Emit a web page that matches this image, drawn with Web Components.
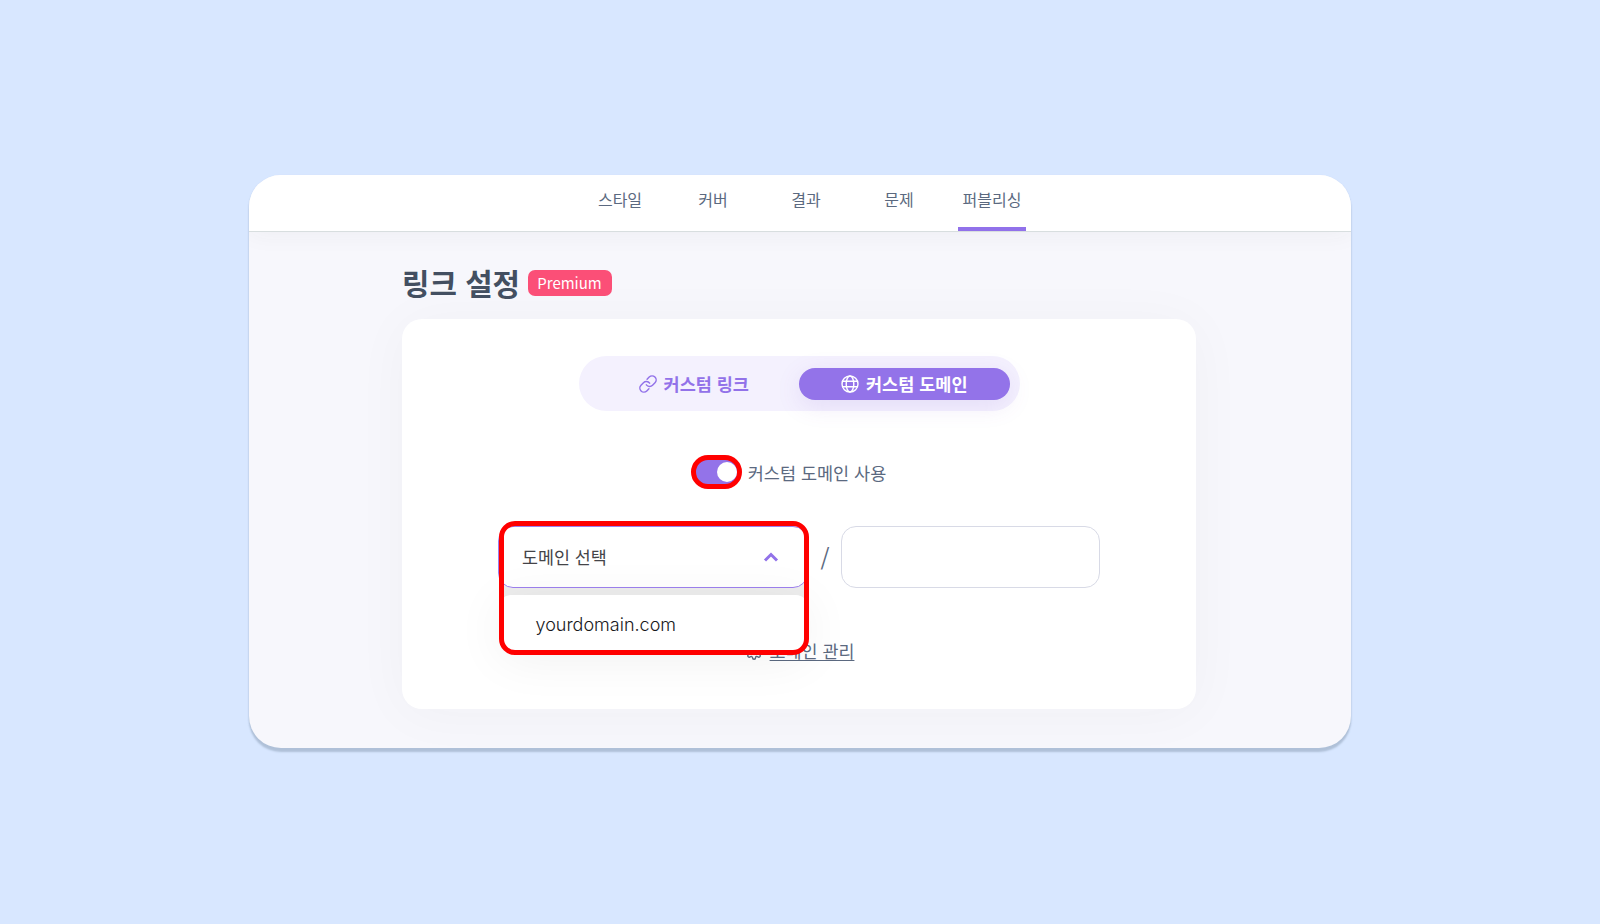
<!DOCTYPE html>
<html lang="ko">
<head>
<meta charset="UTF-8">
<title>링크 설정</title>
<style>
    body {
        margin: 0;
        height: 924px;
        background: #d8e7ff;
        color: #5b6980;
        font-family: "Noto Sans CJK KR", sans-serif;
        overflow: hidden;
        padding: 175px 0 0 249px;
        box-sizing: border-box;
    }
</style>
</head>
<body>
<app-window>
    <nav-tabs slot="nav">
        <nav-tab>스타일</nav-tab>
        <nav-tab>커버</nav-tab>
        <nav-tab>결과</nav-tab>
        <nav-tab>문제</nav-tab>
        <nav-tab active>퍼블리싱</nav-tab>
    </nav-tabs>
    <section-title badge="Premium">링크 설정</section-title>
    <settings-card>
        <segment-control>
            <segment-item icon="link">커스텀 링크</segment-item>
            <segment-item icon="globe" active>커스텀 도메인</segment-item>
        </segment-control>
        <toggle-switch>커스텀 도메인 사용</toggle-switch>
        <domain-row>
            <domain-select label="도메인 선택">yourdomain.com</domain-select>
        </domain-row>
        <manage-link>도메인 관리</manage-link>
    </settings-card>
</app-window>

<script>
const icons = {
    link: `<svg width="18" height="18" viewBox="1 1 22 22" fill="none" stroke="currentColor" stroke-width="1.8" stroke-linecap="round" stroke-linejoin="round"><path d="M10 13a5 5 0 0 0 7.54.54l3-3a5 5 0 0 0-7.07-7.07l-2.6 2.6"/><path d="M14 11a5 5 0 0 0-7.54-.54l-3 3a5 5 0 0 0 7.07 7.07l2.6-2.6"/></svg>`,
    globe: `<svg width="18" height="18" viewBox="0 0 18 18" fill="none" stroke="currentColor" stroke-width="1.4"><circle cx="9" cy="9" r="8"/><ellipse cx="9" cy="9" rx="3.8" ry="8"/><path d="M1.6 6.2h14.8M1.6 11.8h14.8"/></svg>`,
    gear: `<svg width="18" height="18" viewBox="0 0 24 24" fill="none" stroke="currentColor" stroke-width="1.9" stroke-linecap="round" stroke-linejoin="round"><circle cx="12" cy="12" r="3"/><path d="M19.4 15a1.65 1.65 0 0 0 .33 1.82l.06.06a2 2 0 1 1-2.83 2.83l-.06-.06a1.65 1.65 0 0 0-1.82-.33 1.65 1.65 0 0 0-1 1.51V21a2 2 0 0 1-4 0v-.09A1.65 1.65 0 0 0 9 19.4a1.65 1.65 0 0 0-1.82.33l-.06.06a2 2 0 1 1-2.83-2.83l.06-.06a1.65 1.65 0 0 0 .33-1.82 1.65 1.65 0 0 0-1.51-1H3a2 2 0 0 1 0-4h.09A1.65 1.65 0 0 0 4.6 9a1.65 1.65 0 0 0-.33-1.82l-.06-.06a2 2 0 1 1 2.83-2.83l.06.06a1.65 1.65 0 0 0 1.82.33H9a1.65 1.65 0 0 0 1-1.51V3a2 2 0 0 1 4 0v.09a1.65 1.65 0 0 0 1 1.51 1.65 1.65 0 0 0 1.82-.33l.06-.06a2 2 0 1 1 2.83 2.83l-.06.06a1.65 1.65 0 0 0-.33 1.82V9a1.65 1.65 0 0 0 1.51 1H21a2 2 0 0 1 0 4h-.09a1.65 1.65 0 0 0-1.51 1z"/></svg>`
};

class BaseElement extends HTMLElement {
    constructor() {
        super();
        this.attachShadow({ mode: 'open' });
    }

    connectedCallback() {
        this.shadowRoot.innerHTML = this.render();
    }
}

class AppWindow extends BaseElement {
    render() {
        return `
            <style>
                :host {
                    display: flex;
                    flex-direction: column;
                    box-sizing: border-box;
                    width: 1102px;
                    height: 573px;
                    border-radius: 32px;
                    background: #f7f7fc;
                    overflow: hidden;
                    box-shadow: 0 4px 2px #afc0d8, 0 1px 2px #b9c9e4;
                }
                header {
                    position: relative;
                    z-index: 1;
                    height: 56px;
                    flex: none;
                    background: #fff;
                    border-bottom: 1px solid #d8dedf;
                    box-shadow: 0 2px 24px rgba(60, 50, 60, .05);
                }
                main { padding: 34px 155px 0 153px; }
            </style>
            <header><slot name="nav"></slot></header>
            <main><slot></slot></main>
        `;
    }
}

class NavTabs extends BaseElement {
    render() {
        return `
            <style>
                :host {
                    display: flex;
                    justify-content: center;
                    gap: 25px;
                    height: 56px;
                    padding-left: 12px;
                }
            </style>
            <slot></slot>
        `;
    }
}

class NavTab extends BaseElement {
    render() {
        return `
            <style>
                :host {
                    display: block;
                    box-sizing: border-box;
                    width: 68px;
                    padding-top: 12px;
                    text-align: center;
                    font-size: 16px;
                    line-height: 24px;
                    border-bottom: 4px solid transparent;
                }
                :host([active]) { border-bottom-color: #9171ea; }
            </style>
            <slot></slot>
        `;
    }
}

class SectionTitle extends BaseElement {
    render() {
        return `
            <style>
                :host { display: flex; align-items: flex-start; height: 53px; }
                h1 {
                    margin: -2px 0 0;
                    width: 118px;
                    white-space: nowrap;
                    font-size: 29.8px;
                    line-height: 36px;
                    font-weight: 700;
                    color: #434f61;
                }
                span {
                    margin: 4px 0 0 7.5px;
                    box-sizing: border-box;
                    width: 84px;
                    text-align: center;
                    border-radius: 7px;
                    background: #fb4f77;
                    color: #fff;
                    font-size: 15px;
                    line-height: 26px;
                }
            </style>
            <h1><slot></slot></h1>
            <span>${this.getAttribute('badge')}</span>
        `;
    }
}

class SettingsCard extends BaseElement {
    render() {
        return `
            <style>
                :host {
                    display: flex;
                    flex-direction: column;
                    align-items: center;
                    box-sizing: border-box;
                    height: 390px;
                    padding-top: 37px;
                    border-radius: 20px;
                    background: #fff;
                    box-shadow: 0 4px 56px rgba(70, 50, 70, .035);
                }
            </style>
            <slot></slot>
        `;
    }
}

class SegmentControl extends BaseElement {
    render() {
        return `
            <style>
                :host {
                    display: flex;
                    box-sizing: border-box;
                    width: 441px;
                    height: 55px;
                    padding: 11.5px 10px 11px;
                    border-radius: 28px;
                    background: #f4f1fe;
                }
            </style>
            <slot></slot>
        `;
    }
}

class SegmentItem extends BaseElement {
    render() {
        return `
            <style>
                :host {
                    display: flex;
                    flex: 1;
                    align-items: center;
                    justify-content: center;
                    gap: 7px;
                    border-radius: 17px;
                    color: #9272e9;
                    font-size: 17.5px;
                    font-weight: 700;
                    line-height: 32px;
                }
                :host([active]) {
                    color: #fff;
                    background: #9373e9;
                    box-shadow: 0 6px 24px rgba(120, 80, 200, .13);
                }
                svg { flex: none; margin-top: 1px; }
            </style>
            ${icons[this.getAttribute('icon')]}
            <span><slot></slot></span>
        `;
    }
}

class ToggleSwitch extends BaseElement {
    render() {
        return `
            <style>
                :host {
                    display: flex;
                    align-items: center;
                    gap: 6px;
                    height: 34px;
                    margin: 44px 0 0 -21px;
                    font-size: 17.5px;
                    line-height: 26px;
                }
                .track {
                    display: flex;
                    align-items: center;
                    justify-content: flex-end;
                    box-sizing: border-box;
                    width: 51px;
                    height: 34px;
                    border: 5px solid #f00;
                    border-radius: 17px;
                    background: #9373e9;
                }
                .knob { width: 20px; height: 20px; border-radius: 50%; background: #fff; }
                span { padding-top: 1px; }
            </style>
            <div class="track"><div class="knob"></div></div>
            <span><slot></slot></span>
        `;
    }
}

class DomainRow extends BaseElement {
    render() {
        return `
            <style>
                :host {
                    display: flex;
                    width: 602px;
                    height: 62px;
                    margin-top: 37px;
                }
                .slash {
                    flex: 1;
                    padding-left: 1px;
                    text-align: center;
                    font-size: 23px;
                    line-height: 62px;
                }
                .path {
                    box-sizing: border-box;
                    width: 259px;
                    height: 62px;
                    border: 1px solid #d8dae6;
                    border-radius: 15px;
                    background: #fff;
                }
            </style>
            <slot></slot>
            <div class="slash">/</div>
            <div class="path"></div>
        `;
    }
}

class DomainSelect extends BaseElement {
    render() {
        return `
            <style>
                :host {
                    display: block;
                    position: relative;
                    z-index: 2;
                    width: 310px;
                    height: 62px;
                }
                .field {
                    display: flex;
                    align-items: center;
                    justify-content: space-between;
                    box-sizing: border-box;
                    height: 62px;
                    padding: 0 28px 0 23px;
                    border: 1px solid #9d80ee;
                    border-radius: 15px;
                    background: #fff;
                    color: #444448;
                    font-size: 17.4px;
                }
                .field span { padding-bottom: 2px; }
                .field svg { margin-bottom: 1px; }
                .menu {
                    position: absolute;
                    top: 69px;
                    left: 1px;
                    box-sizing: border-box;
                    width: 309px;
                    height: 59px;
                    padding-left: 36.5px;
                    border-radius: 12px 12px 16px 16px;
                    background: #fff;
                    color: #18181b;
                    font: 300 18px/60px Inter, sans-serif;
                    box-shadow: 0 6px 50px rgba(0, 0, 0, .06);
                }
                .gap {
                    position: absolute;
                    top: 45px;
                    left: 3px;
                    width: 304px;
                    height: 40px;
                    background: #ededed;
                    z-index: -1;
                }
                .outline {
                    position: absolute;
                    inset: -5px -1px -67px .5px;
                    border: 5px solid #f00;
                    border-radius: 16px;
                }
            </style>
            <div class="gap"></div>
            <div class="field">
                <span>${this.getAttribute('label')}</span>
                <svg width="16" height="12" viewBox="0 0 16 12" fill="none" stroke="#9272e9" stroke-width="3"><path d="M2 9.5l6-6 6 6"/></svg>
            </div>
            <div class="menu"><slot></slot></div>
            <div class="outline"></div>
        `;
    }
}

class ManageLink extends BaseElement {
    render() {
        return `
            <style>
                :host {
                    display: flex;
                    align-items: center;
                    gap: 7px;
                    margin: 50px 0 0 1px;
                    font-size: 17.4px;
                    line-height: 26px;
                }
                a { text-decoration: underline; text-underline-offset: 2px; text-decoration-thickness: 1px; }
            </style>
            ${icons.gear}
            <a><slot></slot></a>
        `;
    }
}

customElements.define('app-window', AppWindow);
customElements.define('nav-tabs', NavTabs);
customElements.define('nav-tab', NavTab);
customElements.define('section-title', SectionTitle);
customElements.define('settings-card', SettingsCard);
customElements.define('segment-control', SegmentControl);
customElements.define('segment-item', SegmentItem);
customElements.define('toggle-switch', ToggleSwitch);
customElements.define('domain-row', DomainRow);
customElements.define('domain-select', DomainSelect);
customElements.define('manage-link', ManageLink);
</script>
</body>
</html>
